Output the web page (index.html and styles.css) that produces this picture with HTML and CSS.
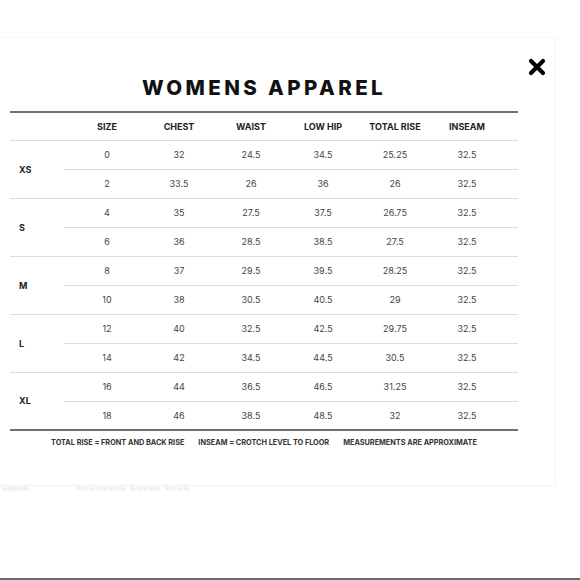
FILE: index.html
```html
<!DOCTYPE html>
<html>
<head>
<meta charset="utf-8">
<link rel="stylesheet" href="styles.css">
</head>
<body>
<div class="page">
  <div class="card">
    <h1 class="title">WOMENS APPAREL</h1>
    <table class="chart">
      <thead>
        <tr>
          <th class="grp"></th>
          <th>SIZE</th><th>CHEST</th><th>WAIST</th><th>LOW HIP</th><th>TOTAL RISE</th><th>INSEAM</th>
          <th class="pad"></th>
        </tr>
      </thead>
      <tbody>
        <tr class="top"><td class="grp" rowspan="2">XS</td><td>0</td><td>32</td><td>24.5</td><td>34.5</td><td>25.25</td><td>32.5</td><td class="pad"></td></tr>
        <tr class="bot"><td>2</td><td>33.5</td><td>26</td><td>36</td><td>26</td><td>32.5</td><td class="pad"></td></tr>
        <tr class="top"><td class="grp" rowspan="2">S</td><td>4</td><td>35</td><td>27.5</td><td>37.5</td><td>26.75</td><td>32.5</td><td class="pad"></td></tr>
        <tr class="bot"><td>6</td><td>36</td><td>28.5</td><td>38.5</td><td>27.5</td><td>32.5</td><td class="pad"></td></tr>
        <tr class="top"><td class="grp" rowspan="2">M</td><td>8</td><td>37</td><td>29.5</td><td>39.5</td><td>28.25</td><td>32.5</td><td class="pad"></td></tr>
        <tr class="bot"><td>10</td><td>38</td><td>30.5</td><td>40.5</td><td>29</td><td>32.5</td><td class="pad"></td></tr>
        <tr class="top"><td class="grp" rowspan="2">L</td><td>12</td><td>40</td><td>32.5</td><td>42.5</td><td>29.75</td><td>32.5</td><td class="pad"></td></tr>
        <tr class="bot"><td>14</td><td>42</td><td>34.5</td><td>44.5</td><td>30.5</td><td>32.5</td><td class="pad"></td></tr>
        <tr class="top"><td class="grp" rowspan="2">XL</td><td>16</td><td>44</td><td>36.5</td><td>46.5</td><td>31.25</td><td>32.5</td><td class="pad"></td></tr>
        <tr class="bot last"><td>18</td><td>46</td><td>38.5</td><td>48.5</td><td>32</td><td>32.5</td><td class="pad"></td></tr>
      </tbody>
    </table>
    <div class="notes">
      <span>TOTAL RISE = FRONT AND BACK RISE</span>
      <span>INSEAM = CROTCH LEVEL TO FLOOR</span>
      <span>MEASUREMENTS ARE APPROXIMATE</span>
    </div>
  </div>
  <div class="ghost"><span>~~~~~</span><span>~~~~~~~~ ~~~~~ ~~~~</span></div>
  <button class="close" aria-label="Close">
    <svg width="18" height="18" viewBox="0 0 18 18"><path d="M3 3 L15 15 M15 3 L3 15" stroke="#000" stroke-width="4.2" stroke-linecap="round"/></svg>
  </button>
</div>
</body>
</html>
```
FILE: styles.css
```css
* { box-sizing: border-box; }
html, body { margin: 0; padding: 0; background: #fff; }
body { font-family: Inter, "Noto Sans", sans-serif; color: #222; }

.page {
  position: relative;
  width: 580px;
  height: 580px;
  overflow: hidden;
  border-bottom: 2px solid #6a6a6a;
}

.card {
  width: 556px;
  height: 449px;
  margin: 37px 0 0 0;
  padding: 37px 0 0 10px;
  border-top: 1px solid #f6f6f6;
  border-right: 1px solid #f2f2f2;
  border-bottom: 1px solid #f2f2f2;
}

.title {
  width: 508px;
  margin: 0 0 10px 0;
  text-align: center;
  font-size: 20.5px;
  line-height: 26px;
  font-weight: 800;
  letter-spacing: 3.4px;
  color: #111;
}

.chart {
  width: 508px;
  border-collapse: collapse;
  table-layout: fixed;
  border-top: 2px solid #707070;
}

.chart th, .chart td {
  padding: 0 0 0 14px;
  text-align: center;
  width: 72px;
}

.chart th.grp, .chart td.grp { width: 54px; padding: 0 0 0 9px; text-align: left; }
.chart th.pad, .chart td.pad { width: 22px; padding: 0; }

.chart thead tr { height: 28px; }
.chart th {
  font-size: 9px;
  font-weight: 700;
  color: #222;
  border-bottom: 1px solid #dcdcdc;
}

.chart tbody tr { height: 29px; }
.chart td {
  font-size: 9px;
  color: #444;
  font-weight: 400;
}
.chart td.grp {
  font-weight: 700;
  color: #222;
  border-bottom: 1px solid #dedede;
}
.chart tr.top td { border-bottom: 1px solid #dedede; }
.chart tr.bot td { border-bottom: 1px solid #dedede; }
.chart tr.last td { border-bottom: 2px solid #707070; }
.chart tbody tr:nth-last-child(2) td.grp { border-bottom: 2px solid #707070; }

.notes {
  width: 508px;
  display: flex;
  justify-content: center;
  gap: 14px;
  margin-top: 7px;
  font-size: 7.3px;
  font-weight: 700;
  color: #333;
}

.ghost {
  display: flex;
  gap: 48px;
  padding: 0 0 0 2px;
  margin-top: -3px;
  font-size: 8px;
  color: #c8c8c8;
  filter: blur(1px);
}
.ghost span:last-child { letter-spacing: 1px; }

.close {
  position: absolute;
  left: 528px;
  top: 58px;
  width: 18px;
  height: 18px;
  padding: 0;
  border: 0;
  background: transparent;
  display: block;
}
.close svg { display: block; }
```
